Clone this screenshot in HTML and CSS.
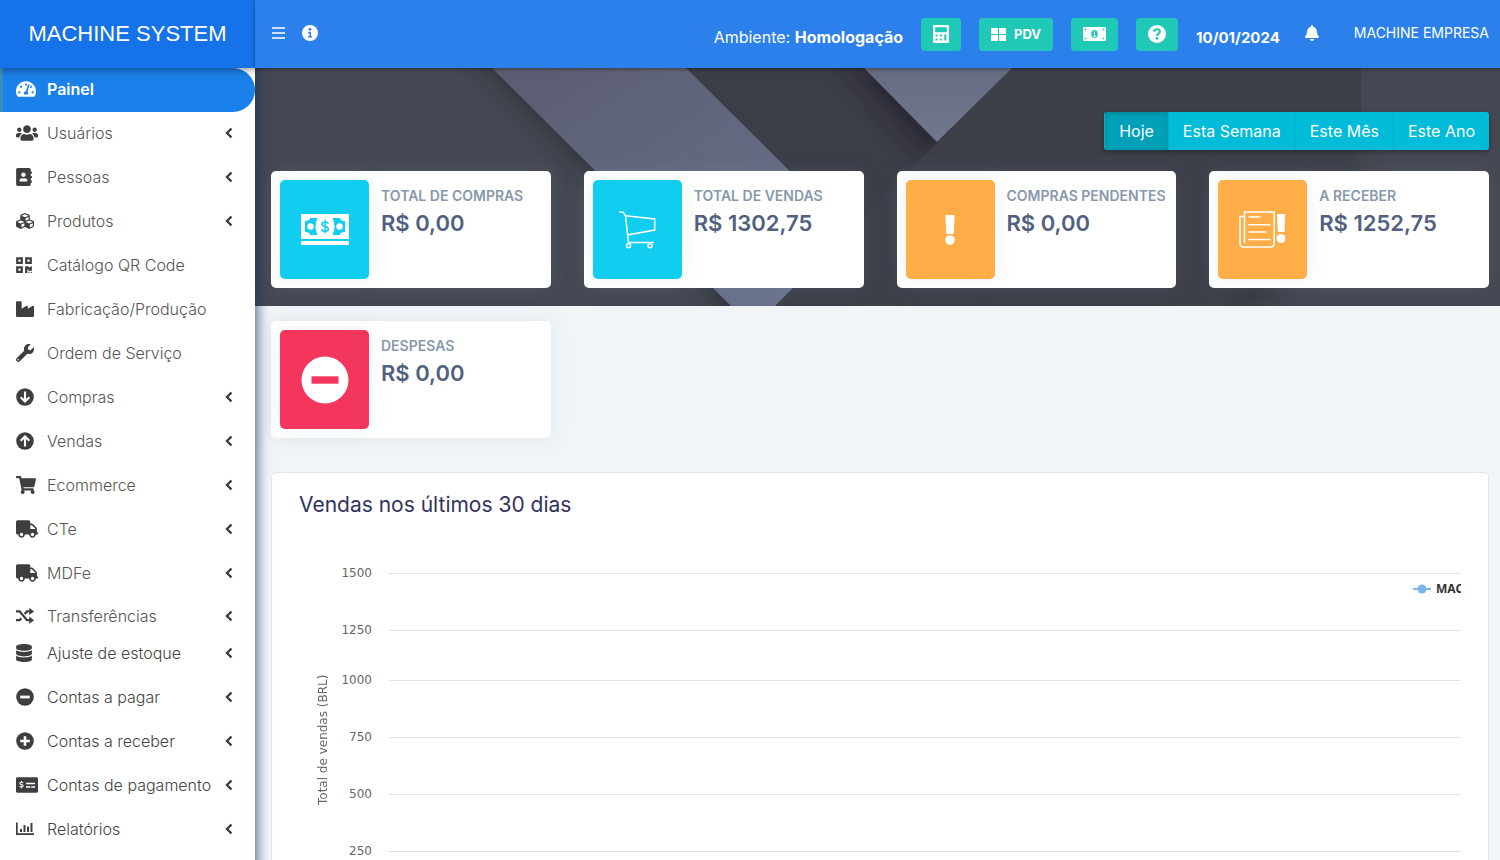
FILE: index.html
```html
<!DOCTYPE html>
<html lang="pt-BR">
<head>
<meta charset="utf-8">
<meta name="viewport" content="width=device-width, initial-scale=1">
<title>Machine System</title>
<link rel="stylesheet" href="styles.css">
</head>
<body>
<svg class="sprite" aria-hidden="true">
  <symbol id="i-dash" viewBox="0 0 576 512"><path d="M288 32C128.94 32 0 160.94 0 320c0 52.8 14.25 102.26 39.06 144.8 5.61 9.62 16.3 15.2 27.44 15.2h443c11.14 0 21.83-5.58 27.44-15.2C561.75 422.26 576 372.8 576 320c0-159.06-128.94-288-288-288zm0 64c14.71 0 26.58 10.13 30.32 23.65-1.11 2.26-2.64 4.23-3.45 6.67l-9.22 27.67c-5.13 3.49-10.97 6.01-17.64 6.01-17.67 0-32-14.33-32-32S270.33 96 288 96zM96 384c-17.67 0-32-14.33-32-32s14.33-32 32-32 32 14.33 32 32-14.33 32-32 32zm48-160c-17.67 0-32-14.33-32-32s14.33-32 32-32 32 14.33 32 32-14.33 32-32 32zm246.77-72.41l-61.33 184C343.13 347.33 352 364.54 352 384c0 11.72-3.38 22.55-8.88 32H232.88c-5.5-9.45-8.88-20.28-8.88-32 0-33.94 26.5-61.43 59.9-63.59l61.34-184.01c4.17-12.56 17.73-19.45 30.36-15.17 12.57 4.19 19.35 17.79 15.17 30.36zm14.66 57.2l15.52-46.55c3.47-1.29 7.13-2.23 11.05-2.23 17.67 0 32 14.33 32 32s-14.33 32-32 32c-11.38-.01-20.89-6.28-26.57-15.22zM480 384c-17.67 0-32-14.33-32-32s14.33-32 32-32 32 14.33 32 32-14.33 32-32 32z"/></symbol>
  <symbol id="i-users" viewBox="0 0 640 512"><path d="M96 224c35.3 0 64-28.7 64-64s-28.7-64-64-64-64 28.7-64 64 28.7 64 64 64zm448 0c35.3 0 64-28.7 64-64s-28.7-64-64-64-64 28.7-64 64 28.7 64 64 64zm32 32h-64c-17.6 0-33.5 7.1-45.1 18.6 40.3 22.1 68.9 62 75.1 109.4h66c17.7 0 32-14.3 32-32v-32c0-35.3-28.7-64-64-64zm-256 0c61.9 0 112-50.1 112-112S381.9 32 320 32 208 82.1 208 144s50.1 112 112 112zm76.8 32h-8.3c-20.8 10-43.9 16-68.5 16s-47.6-6-68.5-16h-8.3C179.6 288 128 339.6 128 403.2V432c0 26.5 21.5 48 48 48h288c26.5 0 48-21.5 48-48v-28.8c0-63.6-51.6-115.2-115.2-115.2zm-223.7-13.4C161.5 263.1 145.6 256 128 256H64c-35.3 0-64 28.7-64 64v32c0 17.7 14.3 32 32 32h65.9c6.3-47.4 34.9-87.3 75.2-109.4z"/></symbol>
  <symbol id="i-book" viewBox="0 0 448 512"><path d="M436 160c6.6 0 12-5.4 12-12v-40c0-6.6-5.4-12-12-12h-20V48c0-26.5-21.5-48-48-48H48C21.5 0 0 21.5 0 48v416c0 26.5 21.5 48 48 48h320c26.5 0 48-21.5 48-48v-48h20c6.6 0 12-5.4 12-12v-40c0-6.6-5.4-12-12-12h-20v-64h20c6.6 0 12-5.4 12-12v-40c0-6.6-5.4-12-12-12h-20v-64h20zm-228-32c35.3 0 64 28.7 64 64s-28.7 64-64 64-64-28.7-64-64 28.7-64 64-64zm112 236.8c0 10.6-10 19.2-22.4 19.2H118.4C106 384 96 375.4 96 364.8v-19.2c0-31.8 30.1-57.6 67.2-57.6h5c12.3 5.1 25.7 8 39.8 8s27.6-2.9 39.8-8h5c37.1 0 67.2 25.8 67.2 57.6v19.2z"/></symbol>
  <symbol id="i-cubes" viewBox="0 0 512 512"><path d="M488.6 250.2L392 214V105.5c0-15-9.3-28.4-23.4-33.7l-100-37.5c-8.1-3.1-17.1-3.1-25.3 0l-100 37.5c-14.1 5.3-23.4 18.7-23.4 33.7V214l-96.6 36.2C9.3 255.5 0 268.9 0 283.9V394c0 13.6 7.7 26.1 19.9 32.2l100 50c10.1 5.1 22.1 5.1 32.2 0l103.9-52 103.9 52c10.1 5.1 22.1 5.1 32.2 0l100-50c12.2-6.1 19.9-18.6 19.9-32.2V283.9c0-15-9.3-28.4-23.4-33.7zM358 214.8l-85 31.9v-68.2l85-37v73.3zM154 104.1l102-38.2 102 38.2v.6l-102 41.4-102-41.4v-.6zm84 291.1l-85 42.5v-79.1l85-38.8v75.4zm0-112l-102 41.4-102-41.4v-.6l102-38.2 102 38.2v.6zm240 112l-85 42.5v-79.1l85-38.8v75.4zm0-112l-102 41.4-102-41.4v-.6l102-38.2 102 38.2v.6z"/></symbol>
  <symbol id="i-qr" viewBox="0 0 448 512"><path d="M0 224h192V32H0v192zM64 96h64v64H64V96zm192-64v192h192V32H256zm128 128h-64V96h64v64zM0 480h192V288H0v192zm64-128h64v64H64v-64zm352-64h32v128h-96v-32h-32v96h-64V288h96v32h64v-32zm0 160h32v32h-32v-32zm-64 0h32v32h-32v-32z"/></symbol>
  <symbol id="i-industry" viewBox="0 0 512 512"><path d="M475.115 163.781L336 252.309v-68.28c0-18.916-20.931-30.399-36.885-20.248L160 252.309V56c0-13.255-10.745-24-24-24H24C10.745 32 0 42.745 0 56v400c0 13.255 10.745 24 24 24h464c13.255 0 24-10.745 24-24V184.029c0-18.917-20.931-30.399-36.885-20.248z"/></symbol>
  <symbol id="i-wrench" viewBox="0 0 512 512"><path d="M507.73 109.1c-2.24-9.03-13.54-12.09-20.12-5.51l-74.36 74.36-67.88-11.31-11.31-67.88 74.36-74.36c6.62-6.62 3.43-17.9-5.66-20.16-47.38-11.74-99.55.91-136.58 37.93-39.64 39.64-50.55 97.1-34.05 147.2L18.74 402.76c-24.99 24.99-24.99 65.51 0 90.5 24.99 24.99 65.51 24.99 90.5 0l213.21-213.21c50.12 16.71 107.47 5.68 147.37-34.22 37.07-37.07 49.7-89.32 37.91-136.73zM64 472c-13.25 0-24-10.75-24-24 0-13.26 10.75-24 24-24s24 10.74 24 24c0 13.25-10.75 24-24 24z"/></symbol>
  <symbol id="i-down" viewBox="0 0 18 18"><circle cx="9" cy="9" r="8.8"/><path class="cut" d="M9 3.6v9.6M4.7 9.2L9 13.5l4.300-4.300" stroke-width="2.100"/></symbol>
  <symbol id="i-up" viewBox="0 0 18 18"><circle cx="9" cy="9" r="8.8"/><path class="cut" d="M9 14.400V4.800M4.700 8.800L9 4.500l4.300 4.300" stroke-width="2.100"/></symbol>
  <symbol id="i-cart" viewBox="0 0 576 512"><path d="M528.12 301.319l47.273-208C578.806 78.301 567.391 64 551.99 64H159.208l-9.166-44.81C147.758 8.021 137.93 0 126.529 0H24C10.745 0 0 10.745 0 24v16c0 13.255 10.745 24 24 24h69.883l70.248 343.435C147.325 417.1 136 435.222 136 456c0 30.928 25.072 56 56 56s56-25.072 56-56c0-15.674-6.447-29.835-16.824-40h209.647C430.447 426.165 424 440.326 424 456c0 30.928 25.072 56 56 56s56-25.072 56-56c0-22.172-12.888-41.332-31.579-50.405l5.517-24.276c3.413-15.018-8.002-29.319-23.403-29.319H218.117l-6.545-32h293.145c11.206 0 20.92-7.754 23.403-18.681z"/></symbol>
  <symbol id="i-truck" viewBox="0 0 640 512"><path d="M624 352h-16V243.900c0-12.700-5.100-24.900-14.100-33.900L494 110.100c-9-9-21.200-14.100-33.900-14.100H416V48c0-26.500-21.500-48-48-48H48C21.500 0 0 21.500 0 48v320c0 26.500 21.500 48 48 48h16c0 53 43 96 96 96s96-43 96-96h128c0 53 43 96 96 96s96-43 96-96h48c8.800 0 16-7.200 16-16v-32c0-8.800-7.200-16-16-16zM160 464c-26.500 0-48-21.500-48-48s21.500-48 48-48 48 21.500 48 48-21.500 48-48 48zm320 0c-26.500 0-48-21.500-48-48s21.500-48 48-48 48 21.500 48 48-21.500 48-48 48zm80-208H416V144h44.100l99.900 99.900V256z"/></symbol>
  <symbol id="i-random" viewBox="0 0 18 18"><path class="line" d="M0 4.300h3.600L11 13.200h3M0 13.200h3.600l1.700-2M8.700 7.100L11 4.300h3" stroke-width="2.300"/><path d="M13.300.8L18 4.400l-4.700 3.600zM13.300 9.600L18 13.200l-4.700 3.700z"/></symbol>
  <symbol id="i-db" viewBox="0 0 448 512"><path d="M448 73.143v45.714C448 159.143 347.667 192 224 192S0 159.143 0 118.857V73.143C0 32.857 100.333 0 224 0s224 32.857 224 73.143zM448 176v102.857C448 319.143 347.667 352 224 352S0 319.143 0 278.857V176c48.125 33.143 136.208 48.572 224 48.572S399.874 209.143 448 176zm0 160v102.857C448 479.143 347.667 512 224 512S0 479.143 0 438.857V336c48.125 33.143 136.208 48.572 224 48.572S399.874 369.143 448 336z"/></symbol>
  <symbol id="i-minus" viewBox="0 0 18 18"><circle cx="9" cy="9" r="8.800"/><path class="cut" d="M4.200 9h9.600" stroke-width="2.800"/></symbol>
  <symbol id="i-plus" viewBox="0 0 18 18"><circle cx="9" cy="9" r="8.800"/><path class="cut" d="M4.200 9h9.600M9 4.200v9.600" stroke-width="2.600"/></symbol>
  <symbol id="i-check" viewBox="0 0 23 18"><rect y="1" width="23" height="16" rx="1.500"/><path class="cut" d="M10.500 7.500H20M10.500 11h4.500M16 11h4" stroke-width="1.500"/><path class="cut" d="M7.400 6.800C6.500 5.800 4 6 4 7.400c0 1.600 3.500.8 3.500 2.400 0 1.400-2.600 1.500-3.700.5M5.700 4.800v1.400M5.700 11v1.400" stroke-width="1.100"/></symbol>
  <symbol id="i-chart" viewBox="0 0 18 18"><path d="M0 2.500h1.700v10.700H18V15H0zM4 9h2v3H4zM7.500 5h2v7h-2zM11 6.500h2V12h-2zM14.500 3h2v9h-2z"/></symbol>
  <symbol id="i-left" viewBox="0 0 8 12"><path class="line" d="M6.500 1.500L2 6l4.500 4.500" stroke-width="2.400"/></symbol>
  <symbol id="i-menu" viewBox="0 0 13 12"><path class="line" d="M0 1h13M0 6h13M0 11h13" stroke-width="1.300"/></symbol>
  <symbol id="i-info" viewBox="0 0 16 16"><circle cx="8" cy="8" r="8"/><circle class="hole" cx="8" cy="4.300" r="1.400"/><path class="cut" d="M6.200 7.500h2v4M6.200 11.700h3.700" stroke-width="1.500"/></symbol>
  <symbol id="i-calc" viewBox="0 0 16 18"><path fill-rule="evenodd" d="M1 0h14q1 0 1 1v16q0 1-1 1H1q-1 0-1-1V1q0-1 1-1zM2.200 2.200v5h11.600v-5zM2.500 9.500v2h2v-2zM6.800 9.500v2h2v-2zM2.500 13.500v2h2v-2zM6.800 13.500v2h2v-2zM11.300 9.500v6h2v-6z"/></symbol>
  <symbol id="i-win" viewBox="0 0 15 13"><path d="M0 0h7v6H0zM8 0h7v6H8zM0 7h7v6H0zM8 7h7v6H8z"/></symbol>
  <symbol id="i-bill" viewBox="0 0 23 14"><rect width="23" height="14" rx="1"/><ellipse class="hole" cx="11.500" cy="7" rx="3.300" ry="4"/><path d="M10.400 5l1.600-.8v4.600h1v1h-3v-1h1V5.400z"/><path class="hole" d="M1.700 1.700h1.600v1.600H1.700zM19.700 1.700h1.600v1.600h-1.600zM1.700 10.700h1.600v1.600H1.700zM19.700 10.700h1.600v1.600h-1.600z"/></symbol>
  <symbol id="i-help" viewBox="0 0 18 18"><circle cx="9" cy="9" r="9"/><path class="cut" d="M6 6.600C6.300 5 7.500 4.200 9 4.200c1.700 0 2.900 1 2.900 2.400C11.900 8.600 9 8.500 9 10.900" stroke-width="2.100"/><circle class="hole" cx="9" cy="13.400" r="1.400"/></symbol>
  <symbol id="i-bell" viewBox="0 0 448 512"><path d="M224 512c35.320 0 63.970-28.650 63.970-64H160.030c0 35.350 28.650 64 63.970 64zm215.390-149.710c-19.320-20.760-55.470-51.990-55.470-154.290 0-77.700-54.480-139.900-127.940-155.160V32c0-17.670-14.320-32-31.980-32s-31.980 14.330-31.980 32v20.840C118.560 68.100 64.080 130.300 64.080 208c0 102.300-36.150 133.530-55.470 154.290-6 6.450-8.660 14.160-8.610 21.710.110 16.400 12.980 32 32.100 32h383.800c19.120 0 32-15.600 32.100-32 .050-7.550-2.610-15.270-8.610-21.710z"/></symbol>
  <symbol id="i-cash" viewBox="0 0 48 32"><path d="M0 0h48v25H0zM0 27h48v4H0z"/><path class="hole" d="M9 4h7.500q-4 8.500 0 17H9q0-3-5-3V7q5 0 5-3zM39 4h-7.500q4 8.500 0 17H39q0-3 5-3V7q-5 0-5-3z"/><circle cx="9.500" cy="12.500" r="3.200"/><circle cx="38.500" cy="12.500" r="3.200"/><path class="cut" d="M27.300 9.800C26.500 7.200 21 7.300 21 10.200c0 3.200 6.400 1.500 6.400 4.800 0 3-6.100 3-6.800.2M24.100 5.800v13.400" stroke-width="1.500"/></symbol>
  <symbol id="i-cartline" viewBox="0 0 37 38"><path class="line" d="M.5 1.200h3.800L6.500 5l3 26.500h25.500M6.500 4.700L35.700 8v11L8.300 24" stroke-width="1.500"/><circle class="line" cx="9.500" cy="34.700" r="2" stroke-width="1.500"/><circle class="line" cx="31" cy="34.700" r="2" stroke-width="1.500"/></symbol>
  <symbol id="i-excl" viewBox="0 0 10 30"><path d="M1.200 0h7.600q.8 0 .8.800L8.800 18q0 1-1 1H2.200q-1 0-1-1L.4.800q0-.8.800-.8z"/><circle cx="5" cy="25" r="4.800"/></symbol>
  <symbol id="i-paper" viewBox="0 0 47 37"><path class="line" d="M5.500 32V1h29.700v31q0 4-3.500 4H4.500Q1 36 1 32V5.500h4.500M9.500 6h12M9.500 13.700h22M9.500 21h18M9.500 28.500h22" stroke-width="1.600"/><path d="M38 3h8.300L45.500 21h-6.600z"/><circle cx="42" cy="27.500" r="4.500"/></symbol>
  <symbol id="i-stop" viewBox="0 0 48 48"><circle cx="24" cy="24" r="23.500"/><path class="hole" d="M10.500 20.300h27v7.400h-27z"/></symbol>
</svg>

<div class="app">
  <header class="topbar">
    <a class="brand" href="#">MACHINE SYSTEM</a>
    <div class="bar">
      <button class="plain" aria-label="Menu"><svg class="ic-menu"><use href="#i-menu"/></svg></button>
      <button class="plain info" aria-label="Informações"><svg class="ic-16"><use href="#i-info"/></svg></button>
      <p class="env">Ambiente: <strong>Homologação</strong></p>
      <button class="action" aria-label="Calculadora"><svg class="ic-calc"><use href="#i-calc"/></svg></button>
      <button class="action"><svg class="ic-win"><use href="#i-win"/></svg>PDV</button>
      <button class="action" aria-label="Caixa"><svg class="ic-bill"><use href="#i-bill"/></svg></button>
      <button class="action" aria-label="Ajuda"><svg class="ic-18"><use href="#i-help"/></svg></button>
      <strong class="date">10/01/2024</strong>
      <button class="plain bell" aria-label="Notificações"><svg class="ic-16"><use href="#i-bell"/></svg></button>
      <a class="company" href="#">MACHINE EMPRESA</a>
    </div>
  </header>

  <nav class="sidebar">
    <ul class="group first">
      <li><a class="item active" href="#"><svg class="w20"><use href="#i-dash"/></svg><span>Painel</span></a></li>
      <li><a class="item" href="#"><svg class="w22"><use href="#i-users"/></svg><span>Usuários</span><svg class="chev"><use href="#i-left"/></svg></a></li>
      <li><a class="item" href="#"><svg class="w16"><use href="#i-book"/></svg><span>Pessoas</span><svg class="chev"><use href="#i-left"/></svg></a></li>
      <li><a class="item" href="#"><svg class="w18"><use href="#i-cubes"/></svg><span>Produtos</span><svg class="chev"><use href="#i-left"/></svg></a></li>
      <li><a class="item" href="#"><svg class="w16"><use href="#i-qr"/></svg><span>Catálogo QR Code</span></a></li>
      <li><a class="item" href="#"><svg class="w18"><use href="#i-industry"/></svg><span>Fabricação/Produção</span></a></li>
      <li><a class="item" href="#"><svg class="w18"><use href="#i-wrench"/></svg><span>Ordem de Serviço</span></a></li>
      <li><a class="item" href="#"><svg class="w18"><use href="#i-down"/></svg><span>Compras</span><svg class="chev"><use href="#i-left"/></svg></a></li>
      <li><a class="item" href="#"><svg class="w18"><use href="#i-up"/></svg><span>Vendas</span><svg class="chev"><use href="#i-left"/></svg></a></li>
      <li><a class="item" href="#"><svg class="w20"><use href="#i-cart"/></svg><span>Ecommerce</span><svg class="chev"><use href="#i-left"/></svg></a></li>
      <li><a class="item" href="#"><svg class="w22"><use href="#i-truck"/></svg><span>CTe</span><svg class="chev"><use href="#i-left"/></svg></a></li>
      <li><a class="item" href="#"><svg class="w22"><use href="#i-truck"/></svg><span>MDFe</span><svg class="chev"><use href="#i-left"/></svg></a></li>
      <li><a class="item" href="#"><svg class="w18"><use href="#i-random"/></svg><span>Transferências</span><svg class="chev"><use href="#i-left"/></svg></a></li>
    </ul>
    <ul class="group dark">
      <li><a class="item" href="#"><svg class="w16"><use href="#i-db"/></svg><span>Ajuste de estoque</span><svg class="chev"><use href="#i-left"/></svg></a></li>
      <li><a class="item" href="#"><svg class="w18"><use href="#i-minus"/></svg><span>Contas a pagar</span><svg class="chev"><use href="#i-left"/></svg></a></li>
      <li><a class="item" href="#"><svg class="w18"><use href="#i-plus"/></svg><span>Contas a receber</span><svg class="chev"><use href="#i-left"/></svg></a></li>
      <li><a class="item" href="#"><svg class="w22"><use href="#i-check"/></svg><span>Contas de pagamento</span><svg class="chev"><use href="#i-left"/></svg></a></li>
      <li><a class="item" href="#"><svg class="w18"><use href="#i-chart"/></svg><span>Relatórios</span><svg class="chev"><use href="#i-left"/></svg></a></li>
    </ul>
  </nav>

  <main class="main">
    <svg class="backdrop" viewBox="0 0 1245 238" preserveAspectRatio="none" aria-hidden="true">
      <defs>
        <linearGradient id="g1" x1="0" y1="0" x2="1" y2="1"><stop offset="0" stop-color="#5a5c70"/><stop offset="1" stop-color="#6d7591"/></linearGradient>
        <linearGradient id="g2" x1="0" y1="0" x2="0" y2="1"><stop offset="0" stop-color="#666b83"/><stop offset="1" stop-color="#70788f"/></linearGradient>
        <filter id="soft" x="-20%" y="-20%" width="140%" height="140%"><feGaussianBlur stdDeviation="12"/></filter>
      </defs>
      <rect width="1245" height="238" fill="#454852"/>
      <path d="M215-20L480 250h100L440-20z" fill="#24262c" opacity=".7" filter="url(#soft)"/>
      <path d="M431 0h326L520 238l-75-75z" fill="#3b3d47"/>
      <path d="M588-10h140L678 92z" fill="#1d1f26" opacity=".65" filter="url(#soft)"/>
      <path d="M1106 0h139v238H948l158-158z" fill="#454852"/>
      <path d="M948 238l158-158v40L1010 238z" fill="#24262c" opacity=".5" filter="url(#soft)"/>
      <path d="M757 0h349v80L948 238H520z" fill="#3d3f49"/>
      <path d="M237 0h194l164 163-75 75h-44z" fill="url(#g1)"/>
      <path d="M609 0h148l-75 74z" fill="url(#g2)"/>
    </svg>

    <div class="period" role="group" aria-label="Período">
      <button class="on">Hoje</button><button>Esta Semana</button><button>Este Mês</button><button>Este Ano</button>
    </div>

    <section class="cards">
      <article class="card"><div class="tile cyan"><svg class="t-48"><use href="#i-cash"/></svg></div><div><h2>TOTAL DE COMPRAS</h2><p>R$ 0,00</p></div></article>
      <article class="card"><div class="tile cyan"><svg class="t-37"><use href="#i-cartline"/></svg></div><div><h2>TOTAL DE VENDAS</h2><p>R$ 1302,75</p></div></article>
      <article class="card"><div class="tile orange"><svg class="t-30"><use href="#i-excl"/></svg></div><div><h2>COMPRAS PENDENTES</h2><p>R$ 0,00</p></div></article>
      <article class="card"><div class="tile orange"><svg class="t-47"><use href="#i-paper"/></svg></div><div><h2>A RECEBER</h2><p>R$ 1252,75</p></div></article>
      <article class="card"><div class="tile red"><svg class="t-stop"><use href="#i-stop"/></svg></div><div><h2>DESPESAS</h2><p>R$ 0,00</p></div></article>
    </section>

    <section class="panel">
      <h1>Vendas nos últimos 30 dias</h1>
      <div class="chart">
        <div class="axis-title">Total de vendas (BRL)</div>
        <ul class="grid">
          <li><span>1500</span></li>
          <li class="short"><span>1250</span></li>
          <li><span>1000</span></li>
          <li><span>750</span></li>
          <li><span>500</span></li>
          <li><span>250</span></li>
        </ul>
        <div class="legend"><svg viewBox="0 0 18 10"><path d="M0 4h18v2H0z"/><circle cx="9" cy="5" r="4.500"/></svg><span>MAC</span></div>
      </div>
    </section>
  </main>
</div>
</body>
</html>
```
FILE: styles.css
```css
* { box-sizing: border-box; }

body {
  margin: 0;
  font-family: Inter, "Open Sans", sans-serif;
  background: #f1f5f8;
}

h1, h2, p, ul { margin: 0; padding: 0; }
ul { list-style: none; }
a { color: inherit; text-decoration: none; }
button { font: inherit; color: inherit; border: 0; cursor: pointer; }

.sprite { position: absolute; width: 0; height: 0; }
svg { flex: none; fill: currentColor; overflow: visible; }
.line { fill: none; stroke: currentColor; }
.cut { fill: none; stroke: var(--behind, #fff); }
.hole { fill: var(--behind, #fff); }

.app {
  display: grid;
  grid-template: 68px 1fr / 255px 1fr;
  height: 100vh;
  overflow: hidden;
}

/* Top bar */
.topbar {
  grid-column: 1 / -1;
  display: grid;
  grid-template-columns: subgrid;
  color: #fff;
  z-index: 3;
}
.brand {
  display: flex;
  align-items: center;
  justify-content: center;
  background: #1572e8;
  font-family: "Liberation Sans", Arial, sans-serif;
  font-size: 22px;
  box-shadow: 0 1px 8px rgba(0, 0, 0, .5);
}
.bar {
  display: flex;
  align-items: center;
  gap: 18px;
  padding: 0 11px 0 17px;
  background: #2b80ec;
  box-shadow: 0 1px 4px rgba(0, 0, 0, .4);
}
.plain { display: flex; padding: 0 0 3px; background: none; }
.info { --behind: #2b80ec; margin-left: -1px; }
.bell { padding: 0 16px 3px 6px; }
.env { margin-left: auto; padding-top: 6px; font-size: 16px; }
.date { padding-top: 6px; font-size: 15px; font-weight: 700; }
.company { padding-bottom: 3px; font-size: 14px; white-space: nowrap; }
.action {
  --behind: #20c9b5;
  display: flex;
  align-items: center;
  gap: 8px;
  height: 33px;
  padding: 0 12px;
  border-radius: 4px;
  background: #20c9b5;
  font-size: 13px;
  font-weight: 700;
}
.ic-menu { width: 13px; height: 12px; }
.ic-16 { width: 16px; height: 16px; }
.ic-18 { width: 18px; height: 18px; }
.ic-calc { width: 16px; height: 18px; }
.ic-win { width: 15px; height: 13px; }
.ic-bill { width: 23px; height: 14px; }

/* Sidebar */
.sidebar {
  background: #fff;
  box-shadow: 2px 0 12px rgba(24, 48, 100, .75);
  z-index: 2;
}
.item {
  display: flex;
  align-items: center;
  height: 44px;
  padding: 0 22px 2px 16px;
  color: #555;
  font-size: 16px;
  font-weight: 300;
  white-space: nowrap;
}
.first li:last-child .item { height: 36px; padding: 4px 22px 0 16px; }
.dark .item { color: #444; }
.item span { flex: 1; }
.item svg { height: 18px; color: #3e3e40; }
.item .chev { width: 8px; height: 12px; }
.w16 { width: 16px; margin-right: 15px; }
.w18 { width: 18px; margin-right: 13px; }
.w20 { width: 20px; margin-right: 11px; }
.w22 { width: 22px; margin-right: 9px; }
.item.active {
  border-left: 3px solid #3c8dbc;
  border-radius: 0 22px 22px 0;
  padding-left: 13px;
  background: #1a81ea;
  color: #fff;
  font-weight: 600;
}
.item.active svg { color: #fff; }

/* Content */
.main { position: relative; min-width: 0; padding: 44px 11px 0 16px; }
.backdrop { position: absolute; top: 0; left: 0; width: 100%; height: 238px; overflow: hidden; }

.period {
  position: relative;
  display: flex;
  width: max-content;
  margin-left: auto;
  border-radius: 3px;
  overflow: hidden;
  color: #fff;
  box-shadow: 0 2px 5px rgba(0, 0, 0, .3);
}
.period button {
  height: 38px;
  padding: 0 14px;
  background: #00bcd9;
  font-size: 16px;
  border-left: 1px solid #00afca;
}
.period .on { background: #00a1b8; box-shadow: inset 0 2px 5px rgba(0, 0, 0, .15); }

.cards {
  position: relative;
  display: grid;
  grid-template-columns: repeat(4, 1fr);
  gap: 33px;
  margin-top: 21px;
}
.card {
  display: flex;
  gap: 12px;
  padding: 9px;
  height: 117px;
  border-radius: 5px;
  background: #fff;
  box-shadow: 0 0 20px rgba(136, 152, 170, .15);
  white-space: nowrap;
}
.tile {
  display: flex;
  align-items: center;
  justify-content: center;
  flex: none;
  width: 89px;
  border-radius: 5px;
  color: #fff;
  background: var(--behind);
  box-shadow: 0 0 20px rgba(136, 152, 170, .15);
}
.cyan { --behind: #11cdef; }
.orange { --behind: #ffad46; }
.red { --behind: #f5365c; }
.t-48 { width: 48px; height: 32px; }
.t-37 { width: 37px; height: 38px; }
.t-30 { width: 10px; height: 30px; }
.t-47 { width: 47px; height: 37px; }
.t-stop { width: 48px; height: 48px; }
.card h2 { font-size: 14px; line-height: 18px; font-weight: 600; color: #8898aa; margin-top: 7px; }
.card p { font-size: 22px; line-height: 36px; font-weight: 600; color: #525f7f; }

.panel {
  position: relative;
  margin-top: 34px;
  padding: 19px 27px 20px 27px;
  border: 1px solid #e3e6ea;
  border-radius: 5px;
  background: #fff;
}
.panel h1 { font-size: 21px; line-height: 26px; font-weight: 400; color: #32325d; }
.chart {
  position: relative;
  display: flex;
  margin-top: 45px;
  font-family: "DejaVu Sans", sans-serif;
  font-size: 12px;
  color: #666;
}
.axis-title {
  width: 18px;
  margin: 104px 0 0 15px;
  line-height: 18px;
  height: 138px;
  writing-mode: vertical-rl;
  transform: rotate(180deg);
  white-space: nowrap;
}
.grid { flex: 1; }
.grid li {
  display: flex;
  align-items: start;
  gap: 17px;
  height: 57px;
}
.grid li.short { height: 50px; }
.grid li::after { content: ""; flex: 1; margin-top: 10px; height: 1px; background: #e2e2e2; }
.grid span { width: 40px; line-height: 20px; text-align: right; }
.legend {
  position: absolute;
  top: 16px;
  right: 0;
  display: flex;
  align-items: center;
  gap: 5px;
  width: 48px;
  overflow: hidden;
  line-height: 20px;
  font-family: "Noto Sans", sans-serif;
  font-weight: 700;
  color: #333;
}
.legend svg { width: 18px; height: 10px; fill: #7cb5ec; }
```
